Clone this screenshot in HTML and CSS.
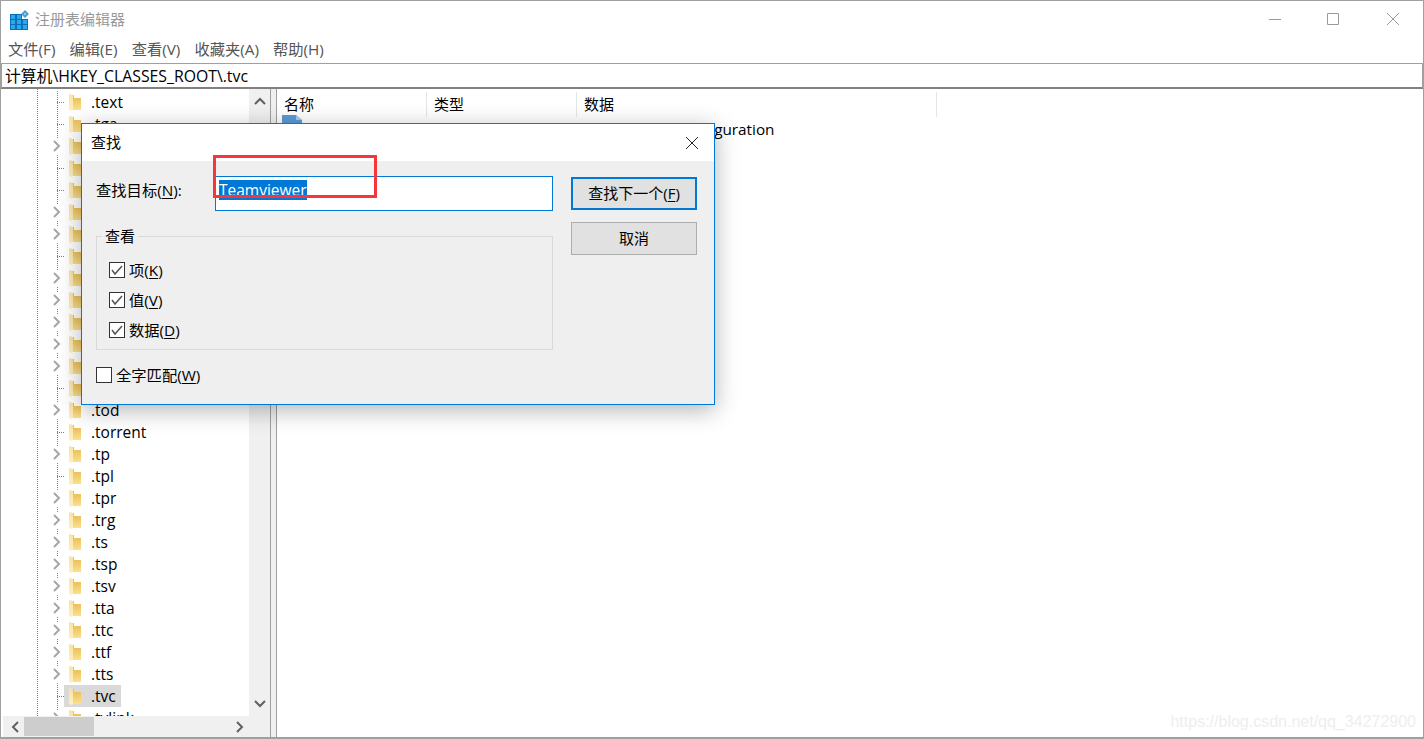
FILE: index.html
```html
<!DOCTYPE html>
<html lang="zh-CN">
<head>
<meta charset="UTF-8">
<title>注册表编辑器</title>
<link rel="stylesheet" href="styles.css">
</head>
<body>

<svg class="defs" width="0" height="0">
    <defs>
        <linearGradient id="foldBack" x1="0" y1="0" x2="0" y2="1">
            <stop offset="0" stop-color="#e8bb52"/>
            <stop offset="0.55" stop-color="#f3cd72"/>
            <stop offset="1" stop-color="#fbe08f"/>
        </linearGradient>
        <linearGradient id="foldFront" x1="0" y1="0" x2="0" y2="1">
            <stop offset="0" stop-color="#f8e3a0"/>
            <stop offset="1" stop-color="#fdf0c2"/>
        </linearGradient>
    </defs>
    <symbol id="folder" viewBox="0 0 12 17">
        <path d="M3 1h2v3h7v12H3z" fill="url(#foldBack)"/>
        <path d="M0 0l4 1v15l-2 1-2-1z" fill="url(#foldFront)"/>
    </symbol>
    <symbol id="chevron" viewBox="0 0 8 12">
        <path d="M1 1l5 5-5 5" fill="none" stroke="#a6a6a6" stroke-width="2"/>
    </symbol>
</svg>

<div class="window">
    <!-- title bar -->
    <div class="titlebar">
        <svg class="app-icon" width="19" height="20" viewBox="0 0 19 20">
            <path d="M0 4h12v5h6v11H0z" fill="#0a6fb8"/>
            <path d="M1 5h4v4H1zM7 5h4v4H7zM1 10h4v4H1zM7 10h4v4H7zM13 10h4v4h-4zM1 15h4v4H1zM7 15h4v4H7zM13 15h4v4h-4z" fill="#27aaec"/>
            <path d="M15 0l4 4-4 4-4-4z" fill="#4a9fd0"/>
            <path d="M15 3l1 1-1 1-1-1z" fill="#d8eefa"/>
        </svg>
        <span class="title">注册表编辑器</span>
        <div class="win-buttons">
            <svg width="14" height="14" viewBox="0 0 14 14"><path d="M1 7.5h12" stroke="#9a9a9a"/></svg>
            <svg width="14" height="14" viewBox="0 0 14 14"><path d="M1.5 1.5h11v11h-11z" fill="none" stroke="#9a9a9a"/></svg>
            <svg width="14" height="14" viewBox="0 0 14 14"><path d="M1 1l12 12M13 1L1 13" stroke="#9a9a9a"/></svg>
        </div>
    </div>

    <!-- menu -->
    <div class="menubar">
        <span>文件(F)</span>
        <span>编辑(E)</span>
        <span>查看(V)</span>
        <span>收藏夹(A)</span>
        <span>帮助(H)</span>
    </div>

    <div class="address">计算机\HKEY_CLASSES_ROOT\.tvc</div>

    <div class="main">
        <!-- key tree -->
        <div class="tree-pane">
            <div class="tree-top">
                <div class="tree" id="tree"></div>
                <div class="vscroll">
                    <svg width="12" height="8" viewBox="0 0 12 8"><path d="M1 7l5-5 5 5" fill="none" stroke="#606060" stroke-width="2"/></svg>
                    <svg width="12" height="8" viewBox="0 0 12 8"><path d="M1 1l5 5 5-5" fill="none" stroke="#606060" stroke-width="2"/></svg>
                </div>
            </div>
            <div class="hscroll">
                <svg width="8" height="12" viewBox="0 0 8 12"><path d="M7 1L2 6l5 5" fill="none" stroke="#606060" stroke-width="2"/></svg>
                <div class="hthumb"></div>
                <svg width="8" height="12" viewBox="0 0 8 12"><path d="M1 1l5 5-5 5" fill="none" stroke="#606060" stroke-width="2"/></svg>
            </div>
        </div>

        <div class="splitter"></div>

        <!-- values -->
        <div class="list-pane">
            <div class="list-head">
                <div class="col col-name">名称</div>
                <div class="col col-type">类型</div>
                <div class="col col-data">数据</div>
            </div>
            <div class="list-row">
                <svg class="value-icon" width="20" height="18" viewBox="0 0 20 18"><path d="M0 0h14l6 5v13H0z" fill="#5b9bd5"/><path d="M14 0l6 5h-6z" fill="#a9cbe8"/></svg>
                <span class="value-data">TeamViewer Configuration</span>
            </div>
            <div class="watermark">https://blog.csdn.net/qq_34272900</div>
        </div>
    </div>
</div>

<!-- find dialog -->
<div class="dialog">
    <div class="dialog-title">
        <span class="dialog-name">查找</span>
        <svg width="14" height="14" viewBox="0 0 14 14"><path d="M1 1l12 12M13 1L1 13" stroke="#222"/></svg>
    </div>
    <div class="dialog-body">
        <div class="dialog-left">
            <div class="find-row">
                <span class="find-label">查找目标(<u>N</u>):</span>
                <div class="find-input"><span class="selected">Teamviewer</span></div>
            </div>
            <fieldset class="look">
                <legend>查看</legend>
                <label class="check"><span class="box on"></span><span class="check-text">项(<u>K</u>)</span></label>
                <label class="check"><span class="box on"></span><span class="check-text">值(<u>V</u>)</span></label>
                <label class="check"><span class="box on"></span><span class="check-text">数据(<u>D</u>)</span></label>
            </fieldset>
            <label class="check whole"><span class="box"></span><span class="check-text">全字匹配(<u>W</u>)</span></label>
        </div>
        <div class="dialog-right">
            <div class="btn default"><span>查找下一个(<u>F</u>)</span></div>
            <div class="btn"><span>取消</span></div>
        </div>
    </div>
</div>

<div class="red-box"></div>

<script>
    // name, has children. rows behind the dialog have no visible name
    var keys = [
        [".text", 0], [".tga", 0], ["", 1], ["", 0], ["", 0], ["", 1], ["", 1],
        ["", 0], ["", 1], ["", 1], ["", 1], ["", 1], ["", 1], ["", 0],
        [".tod", 1], [".torrent", 0], [".tp", 1], [".tpl", 0], [".tpr", 1], [".trg", 1], [".ts", 1],
        [".tsp", 1], [".tsv", 1], [".tta", 1], [".ttc", 1], [".ttf", 1], [".tts", 1], [".tvc", 0], [".tvlink", 1]
    ];
    var html = "";
    keys.forEach(function (k) {
        var sel = k[0] === ".tvc" ? " sel" : "";
        html += '<div class="node">' +
            '<span class="' + (k[1] ? "arrow" : "dots") + '">' +
            (k[1] ? '<svg width="8" height="12"><use href="#chevron"/></svg>' : "") + '</span>' +
            '<span class="key' + sel + '"><svg width="12" height="17"><use href="#folder"/></svg>' +
            '<span class="key-name">' + k[0] + '</span></span></div>';
    });
    document.getElementById("tree").innerHTML = html;
</script>

</body>
</html>
```

FILE: styles.css
```css
* {
    box-sizing: border-box;
}

html, body {
    margin: 0;
    height: 100%;
    overflow: hidden;
}

body {
    font-family: "Open Sans", "Noto Sans CJK SC", sans-serif;
    font-size: 15px;
    color: #000;
    background: #fff;
}

u {
    text-underline-offset: 2px;
}

.defs {
    position: absolute;
}

.window {
    height: 739px;
    display: flex;
    flex-direction: column;
    border: 1px solid #a0a0a0;
    border-width: 1px 1px 2px 1px;
    background: #fff;
}

.titlebar {
    height: 37px;
    flex: none;
    display: flex;
    align-items: center;
    padding-left: 9px;
}

.title {
    margin-left: 6px;
    margin-bottom: 3px;
    color: #999;
}

.win-buttons {
    margin-left: auto;
    margin-bottom: 2px;
    display: flex;
    gap: 46px;
    padding-right: 23px;
}

.win-buttons svg:first-child {
    margin-right: -2px;
}

.menubar {
    height: 24px;
    flex: none;
    display: flex;
    gap: 14px;
    padding-left: 7px;
    color: #555;
    font-size: 15.3px;
    line-height: 23px;
}

.address {
    height: 26px;
    flex: none;
    border: 1px solid #a0a0a0;
    border-bottom: 2px solid #808080;
    margin-top: 1px;
    padding-left: 3px;
    font-size: 15.8px;
    line-height: 24px;
    white-space: nowrap;
}

.main {
    flex: 1;
    min-height: 0;
    display: flex;
}

.tree-pane {
    width: 270px;
    flex: none;
    display: flex;
    flex-direction: column;
    border-right: 1px solid #a0a0a0;
    padding-left: 2px;
}

.tree-top {
    flex: 1;
    min-height: 0;
    display: flex;
}

.tree {
    flex: 1;
    overflow: hidden;
    padding: 2px 0 0 34px;
    background-image: linear-gradient(#808080 50%, transparent 50%);
    background-size: 1px 2px;
    background-repeat: repeat-y;
    background-position: 34px 0;
}

.vscroll {
    width: 21px;
    flex: none;
    background: #f0f0f0;
    display: flex;
    flex-direction: column;
    justify-content: space-between;
    align-items: center;
    padding: 8px 0;
}

.hscroll {
    height: 21px;
    flex: none;
    display: flex;
    align-items: center;
    background: #f0f0f0;
    padding: 0 26px 0 8px;
}

.hthumb {
    width: 70px;
    height: 19px;
    background: #cdcdcd;
    margin: 0 auto 0 5px;
}

.node {
    height: 22px;
    display: flex;
    align-items: center;
    background-image: linear-gradient(#808080 50%, transparent 50%);
    background-size: 1px 2px;
    background-repeat: repeat-y;
    background-position: 20px 0;
}

.arrow, .dots {
    width: 27px;
    flex: none;
    display: flex;
    justify-content: flex-end;
    padding-right: 3px;
}

.arrow svg {
    background: #fff;
    box-shadow: 0 0 0 2px #fff;
}

.dots {
    height: 1px;
    margin-left: 20px;
    width: 7px;
    padding: 0;
    background-image: linear-gradient(90deg, #808080 50%, transparent 50%);
    background-size: 2px 1px;
}

.key {
    height: 22px;
    display: flex;
    align-items: center;
    padding: 0 5px 0 5px;
}

.key.sel {
    background: #d9d9d9;
}

.key-name {
    margin-left: 10px;
    font-size: 15.5px;
}

.splitter {
    width: 5px;
    flex: none;
    background: #f0f0f0;
}

.list-pane {
    flex: 1;
    min-width: 0;
    border-left: 1px solid #a0a0a0;
    position: relative;
}

.list-head {
    height: 26px;
    padding-top: 3px;
    display: flex;
}

.col {
    height: 25px;
    padding-left: 7px;
    line-height: 25px;
    border-right: 1px solid #e5e5e5;
}

.col-name, .col-type {
    width: 150px;
}

.col-data {
    width: 360px;
}

.list-row {
    height: 22px;
    display: flex;
    align-items: flex-start;
    padding-left: 5px;
}

.value-data {
    margin-left: 283px;
    font-size: 15.3px;
    line-height: 22px;
    margin-top: 3px;
}

.watermark {
    position: absolute;
    right: 7px;
    bottom: 6px;
    font-family: "Liberation Sans", sans-serif;
    font-size: 16px;
    color: #eeeeee;
}

/* find dialog */
.dialog {
    position: absolute;
    left: 81px;
    top: 123px;
    width: 634px;
    height: 282px;
    border: 1px solid #0078d7;
    background: #efefef;
    box-shadow: 0 5px 22px rgba(0,0,0,0.3);
    font-size: 15.3px;
}

.dialog-title {
    height: 37px;
    background: #fff;
    display: flex;
    align-items: center;
    justify-content: space-between;
    padding: 0 15px 0 9px;
}

.dialog-name {
    margin-bottom: 3px;
    font-size: 15px;
}

.dialog-body {
    display: flex;
    padding: 15px 17px 0 14px;
    gap: 18px;
}

.dialog-left {
    width: 457px;
}

.find-row {
    display: flex;
    align-items: center;
    justify-content: space-between;
}

.find-label {
    margin-bottom: 9px;
}

.find-input {
    width: 338px;
    height: 35px;
    background: #fff;
    border: 1px solid #0078d7;
    padding: 2px 3px;
    font-size: 15.5px;
}

.selected {
    display: inline-block;
    height: 20px;
    line-height: 20px;
    background: #0078d7;
    color: #fff;
}

.look {
    margin: 14px 0 0;
    padding: 7px 0 0 12px;
    height: 125px;
    border: 1px solid #d9d9d9;
}

.look legend {
    padding: 0 3px 2px;
    margin-left: -7px;
    font-size: 15px;
}

.check {
    display: flex;
    align-items: center;
    gap: 4px;
    height: 30px;
}

.check-text {
    margin-bottom: 3px;
}

.whole {
    margin-top: 10px;
}

.box {
    width: 16px;
    height: 16px;
    flex: none;
    background-color: #fff;
    border: 1px solid #333;
}

.box.on {
    background: #fff url("data:image/svg+xml,%3Csvg xmlns='http://www.w3.org/2000/svg' width='14' height='14'%3E%3Cpath d='M2 7l3 4 7-8' fill='none' stroke='%23555' stroke-width='1.5'/%3E%3C/svg%3E") center no-repeat;
}

.dialog-right {
    width: 126px;
    padding-top: 1px;
    font-size: 15px;
}

.btn {
    height: 33px;
    background: #e1e1e1;
    border: 1px solid #adadad;
    display: flex;
    align-items: center;
    justify-content: center;
    padding-bottom: 2px;
    margin-bottom: 12px;
}

.btn.default {
    border: 2px solid #0078d7;
}

.red-box {
    position: absolute;
    left: 213px;
    top: 155px;
    width: 164px;
    height: 43px;
    border: 3px solid #f5373c;
}
```
